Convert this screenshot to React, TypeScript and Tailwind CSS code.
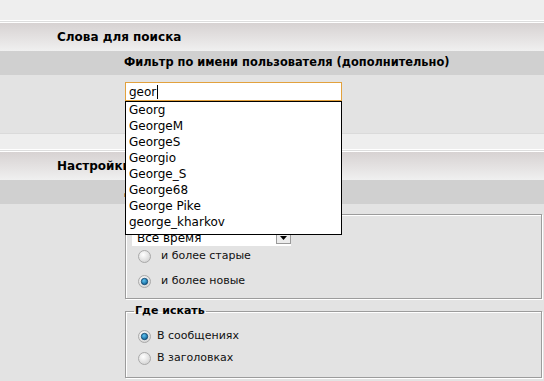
import React from "react";

const users = [
  "Georg",
  "GeorgeM",
  "GeorgeS",
  "Georgio",
  "George_S",
  "George68",
  "George Pike",
  "george_kharkov",
];

function Radio({ checked }: { checked?: boolean }) {
  return (
    <svg width="13" height="13" viewBox="0 0 13 13" className="shrink-0">
      <defs>
        <radialGradient id="rbg" cx="40%" cy="35%" r="70%">
          <stop offset="0%" stopColor="#ffffff" />
          <stop offset="100%" stopColor="#d2d2d2" />
        </radialGradient>
        <radialGradient id="rdot" cx="40%" cy="35%" r="70%">
          <stop offset="0%" stopColor="#5fc3f0" />
          <stop offset="100%" stopColor="#0b5f95" />
        </radialGradient>
      </defs>
      <circle cx="6.5" cy="6.5" r="6" fill="url(#rbg)" stroke="#a9a9a9" />
      {checked && (
        <circle cx="6.5" cy="6.5" r="3.2" fill="url(#rdot)" stroke="#0c3f66" strokeWidth="0.8" />
      )}
    </svg>
  );
}

function SectionTop({ title, sub }: { title: string; sub: string }) {
  return (
    <>
      <div className="h-px bg-white" />
      <div className="h-px bg-[#dddddd]" />
      <div className="h-px bg-white" />
      <div className="flex h-[28px] items-center bg-linear-to-b from-[#d7d2d2] to-[#f0f0f0] pl-[57px] text-[12px] font-bold text-black">
        {title}
      </div>
      <div className="flex h-[24px] items-center bg-[#d0d0d0] pl-[124px] text-[11.4px] font-bold text-black">
        {sub}
      </div>
    </>
  );
}

export default function App() {
  return (
    <div className="relative h-[381px] w-[544px] overflow-hidden bg-[#e3e3e3] font-['DejaVu_Sans',Verdana,sans-serif] text-[11px] text-[#111]">
      <div className="h-[20px] bg-[#eeeeee]" />
      <SectionTop title="Слова для поиска" sub="Фильтр по имени пользователя (дополнительно)" />

      <div className="h-[58px] bg-[#e3e3e3] pt-[7px]">
        <div className="ml-[125px] flex h-[19px] w-[217px] items-center border border-[#e2a13d] bg-white pl-[3px] text-[12px] text-black">
          geor
          <span className="ml-px h-[14px] w-px bg-black" />
        </div>
      </div>

      <div className="h-[16px] border-t border-[#dadada] bg-[#eeeeee]" />
      <SectionTop title="Настройки поиска" sub="Дата сообщения" />

      <div className="pt-[3px]">
        <fieldset className="ml-[125px] mr-[2px] border border-[#9c9c9c] px-[6px] pb-[9px] shadow-[inset_1px_1px_0_#fff,1px_1px_0_#fff]">
          <legend className="px-[2px] text-[11px] leading-[14px] font-bold text-black">
            Искать сообщения за период
          </legend>
          <div className="mt-[8px] flex h-[17px] w-[159px] items-center bg-white">
            <span className="flex-1 pl-[5px] text-[12px] text-black">Все время</span>
            <span className="flex h-[13px] w-[15px] items-center justify-center border border-[#9a9a9a] bg-[#ececec]">
              <svg width="7" height="4" viewBox="0 0 7 4">
                <path d="M0 0h7L3.5 4z" fill="#000" />
              </svg>
            </span>
          </div>
          <label className="mt-[2px] flex h-[16px] items-center gap-[10px] pl-[6px]">
            <Radio />
            <span>и более старые</span>
          </label>
          <label className="mt-[9px] flex h-[16px] items-center gap-[10px] pl-[6px]">
            <Radio checked />
            <span>и более новые</span>
          </label>
        </fieldset>

        <fieldset className="mt-[5px] ml-[125px] mr-[2px] border border-[#9c9c9c] px-[6px] pb-[11px] shadow-[inset_1px_1px_0_#fff,1px_1px_0_#fff]">
          <legend className="ml-[2px] px-px text-[11px] leading-[14px] font-bold text-black">
            Где искать
          </legend>
          <label className="mt-[10px] flex h-[16px] items-center gap-[6px] pl-[6px]">
            <Radio checked />
            <span>В сообщениях</span>
          </label>
          <label className="mt-[6px] flex h-[16px] items-center gap-[6px] pl-[6px]">
            <Radio />
            <span>В заголовках</span>
          </label>
        </fieldset>
      </div>

      <ul className="absolute top-[101px] left-[125px] w-[217px] border border-black bg-white pb-[4px] text-[12px] text-black">
        {users.map((u) => (
          <li key={u} className="flex h-[16px] items-center pl-[3px]">
            {u}
          </li>
        ))}
      </ul>
    </div>
  );
}
